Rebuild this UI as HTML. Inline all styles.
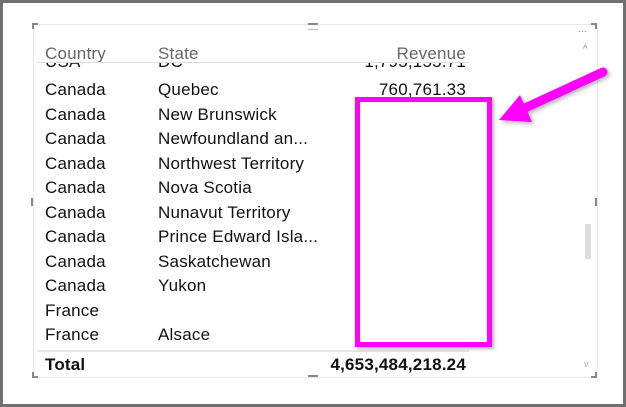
<!DOCTYPE html><html><head><style>
body{margin:0;width:626px;height:407px;overflow:hidden;background:#fff;font-family:"Liberation Sans",sans-serif;}
.frame{position:absolute;left:0;top:0;width:620px;height:401px;border:3px solid #707070;}
.t{position:absolute;font-size:17px;letter-spacing:0.2px;color:#111;white-space:nowrap;line-height:20px;}
.h{color:#666;}
.r{text-align:right;width:200px;}
</style></head><body>
<div class="frame"></div>
<div style="position:absolute;left:33px;top:24px;width:563px;height:352px;border:1px solid #e8e8e8;"></div>
<div style="position:absolute;left:37px;top:62px;width:432px;height:1px;background:#ddd"></div>
<div style="position:absolute;left:37px;top:350px;width:432px;height:2px;background:#e6e6e6"></div>
<div style="position:absolute;left:585px;top:224px;width:6px;height:35px;background:#ddd"></div>
<div style="position:absolute;left:32px;top:23px;width:4px;height:4px;border-left:2px solid #888;border-top:2px solid #888"></div>
<div style="position:absolute;left:591px;top:23px;width:4px;height:4px;border-right:2px solid #888;border-top:2px solid #888"></div>
<div style="position:absolute;left:32px;top:372px;width:4px;height:4px;border-left:2px solid #888;border-bottom:2px solid #888"></div>
<div style="position:absolute;left:591px;top:372px;width:4px;height:4px;border-right:2px solid #888;border-bottom:2px solid #888"></div>
<div style="position:absolute;left:308px;top:23px;width:10px;height:2px;background:#888"></div>
<div style="position:absolute;left:308px;top:29px;width:10px;height:1px;background:#bbb"></div>
<div style="position:absolute;left:308px;top:375px;width:10px;height:2px;background:#888"></div>
<div style="position:absolute;left:31px;top:198px;width:2px;height:8px;background:#888"></div>
<div style="position:absolute;left:595px;top:198px;width:2px;height:8px;background:#888"></div>
<div class="t" style="left:578px;top:20px;font-size:10px;color:#888">...</div>
<div class="t" style="left:583px;top:40px;font-size:10px;color:#888">^</div>
<div class="t" style="left:584px;top:354px;font-size:9px;color:#aaa">v</div>
<div style="position:absolute;left:37px;top:44px;width:540px;height:18px;overflow:hidden">
<div class="t h" style="left:8px;top:0px">Country</div><div class="t h" style="left:121px;top:0px">State</div><div class="t h r" style="left:229px;top:0px">Revenue</div></div>
<div style="position:absolute;left:37px;top:63px;width:540px;height:286px;overflow:hidden">
<div class="t" style="left:8px;top:-11px">USA</div><div class="t" style="left:121px;top:-11px">DC</div><div class="t r" style="left:229px;top:-11px">1,795,155.71</div>
<div class="t" style="left:8px;top:17px">Canada</div><div class="t" style="left:121px;top:17px">Quebec</div><div class="t r" style="left:229px;top:17px">760,761.33</div>
<div class="t" style="left:8px;top:42px">Canada</div><div class="t" style="left:121px;top:42px">New Brunswick</div>
<div class="t" style="left:8px;top:66px">Canada</div><div class="t" style="left:121px;top:66px">Newfoundland an...</div>
<div class="t" style="left:8px;top:91px">Canada</div><div class="t" style="left:121px;top:91px">Northwest Territory</div>
<div class="t" style="left:8px;top:115px">Canada</div><div class="t" style="left:121px;top:115px">Nova Scotia</div>
<div class="t" style="left:8px;top:140px">Canada</div><div class="t" style="left:121px;top:140px">Nunavut Territory</div>
<div class="t" style="left:8px;top:164px">Canada</div><div class="t" style="left:121px;top:164px">Prince Edward Isla...</div>
<div class="t" style="left:8px;top:189px">Canada</div><div class="t" style="left:121px;top:189px">Saskatchewan</div>
<div class="t" style="left:8px;top:213px">Canada</div><div class="t" style="left:121px;top:213px">Yukon</div>
<div class="t" style="left:8px;top:238px">France</div>
<div class="t" style="left:8px;top:262px">France</div><div class="t" style="left:121px;top:262px">Alsace</div>
</div>
<div class="t" style="left:45px;top:355px;font-weight:bold">Total</div>
<div class="t r" style="left:266px;top:355px;font-weight:bold">4,653,484,218.24</div>
<div style="position:absolute;left:355px;top:97px;width:127px;height:240px;border:5px solid #ff00ff;box-shadow:2px 2px 3px rgba(0,0,0,.3)"></div>
<svg style="position:absolute;left:0;top:0" width="626" height="407"><g style="filter:drop-shadow(2px 2px 2px rgba(0,0,0,.3))">
<line x1="603" y1="72" x2="525" y2="108" stroke="#ff00ff" stroke-width="9" stroke-linecap="round"/>
<polygon points="499,120 520,95 532,122" fill="#ff00ff"/></g></svg>
</body></html>
